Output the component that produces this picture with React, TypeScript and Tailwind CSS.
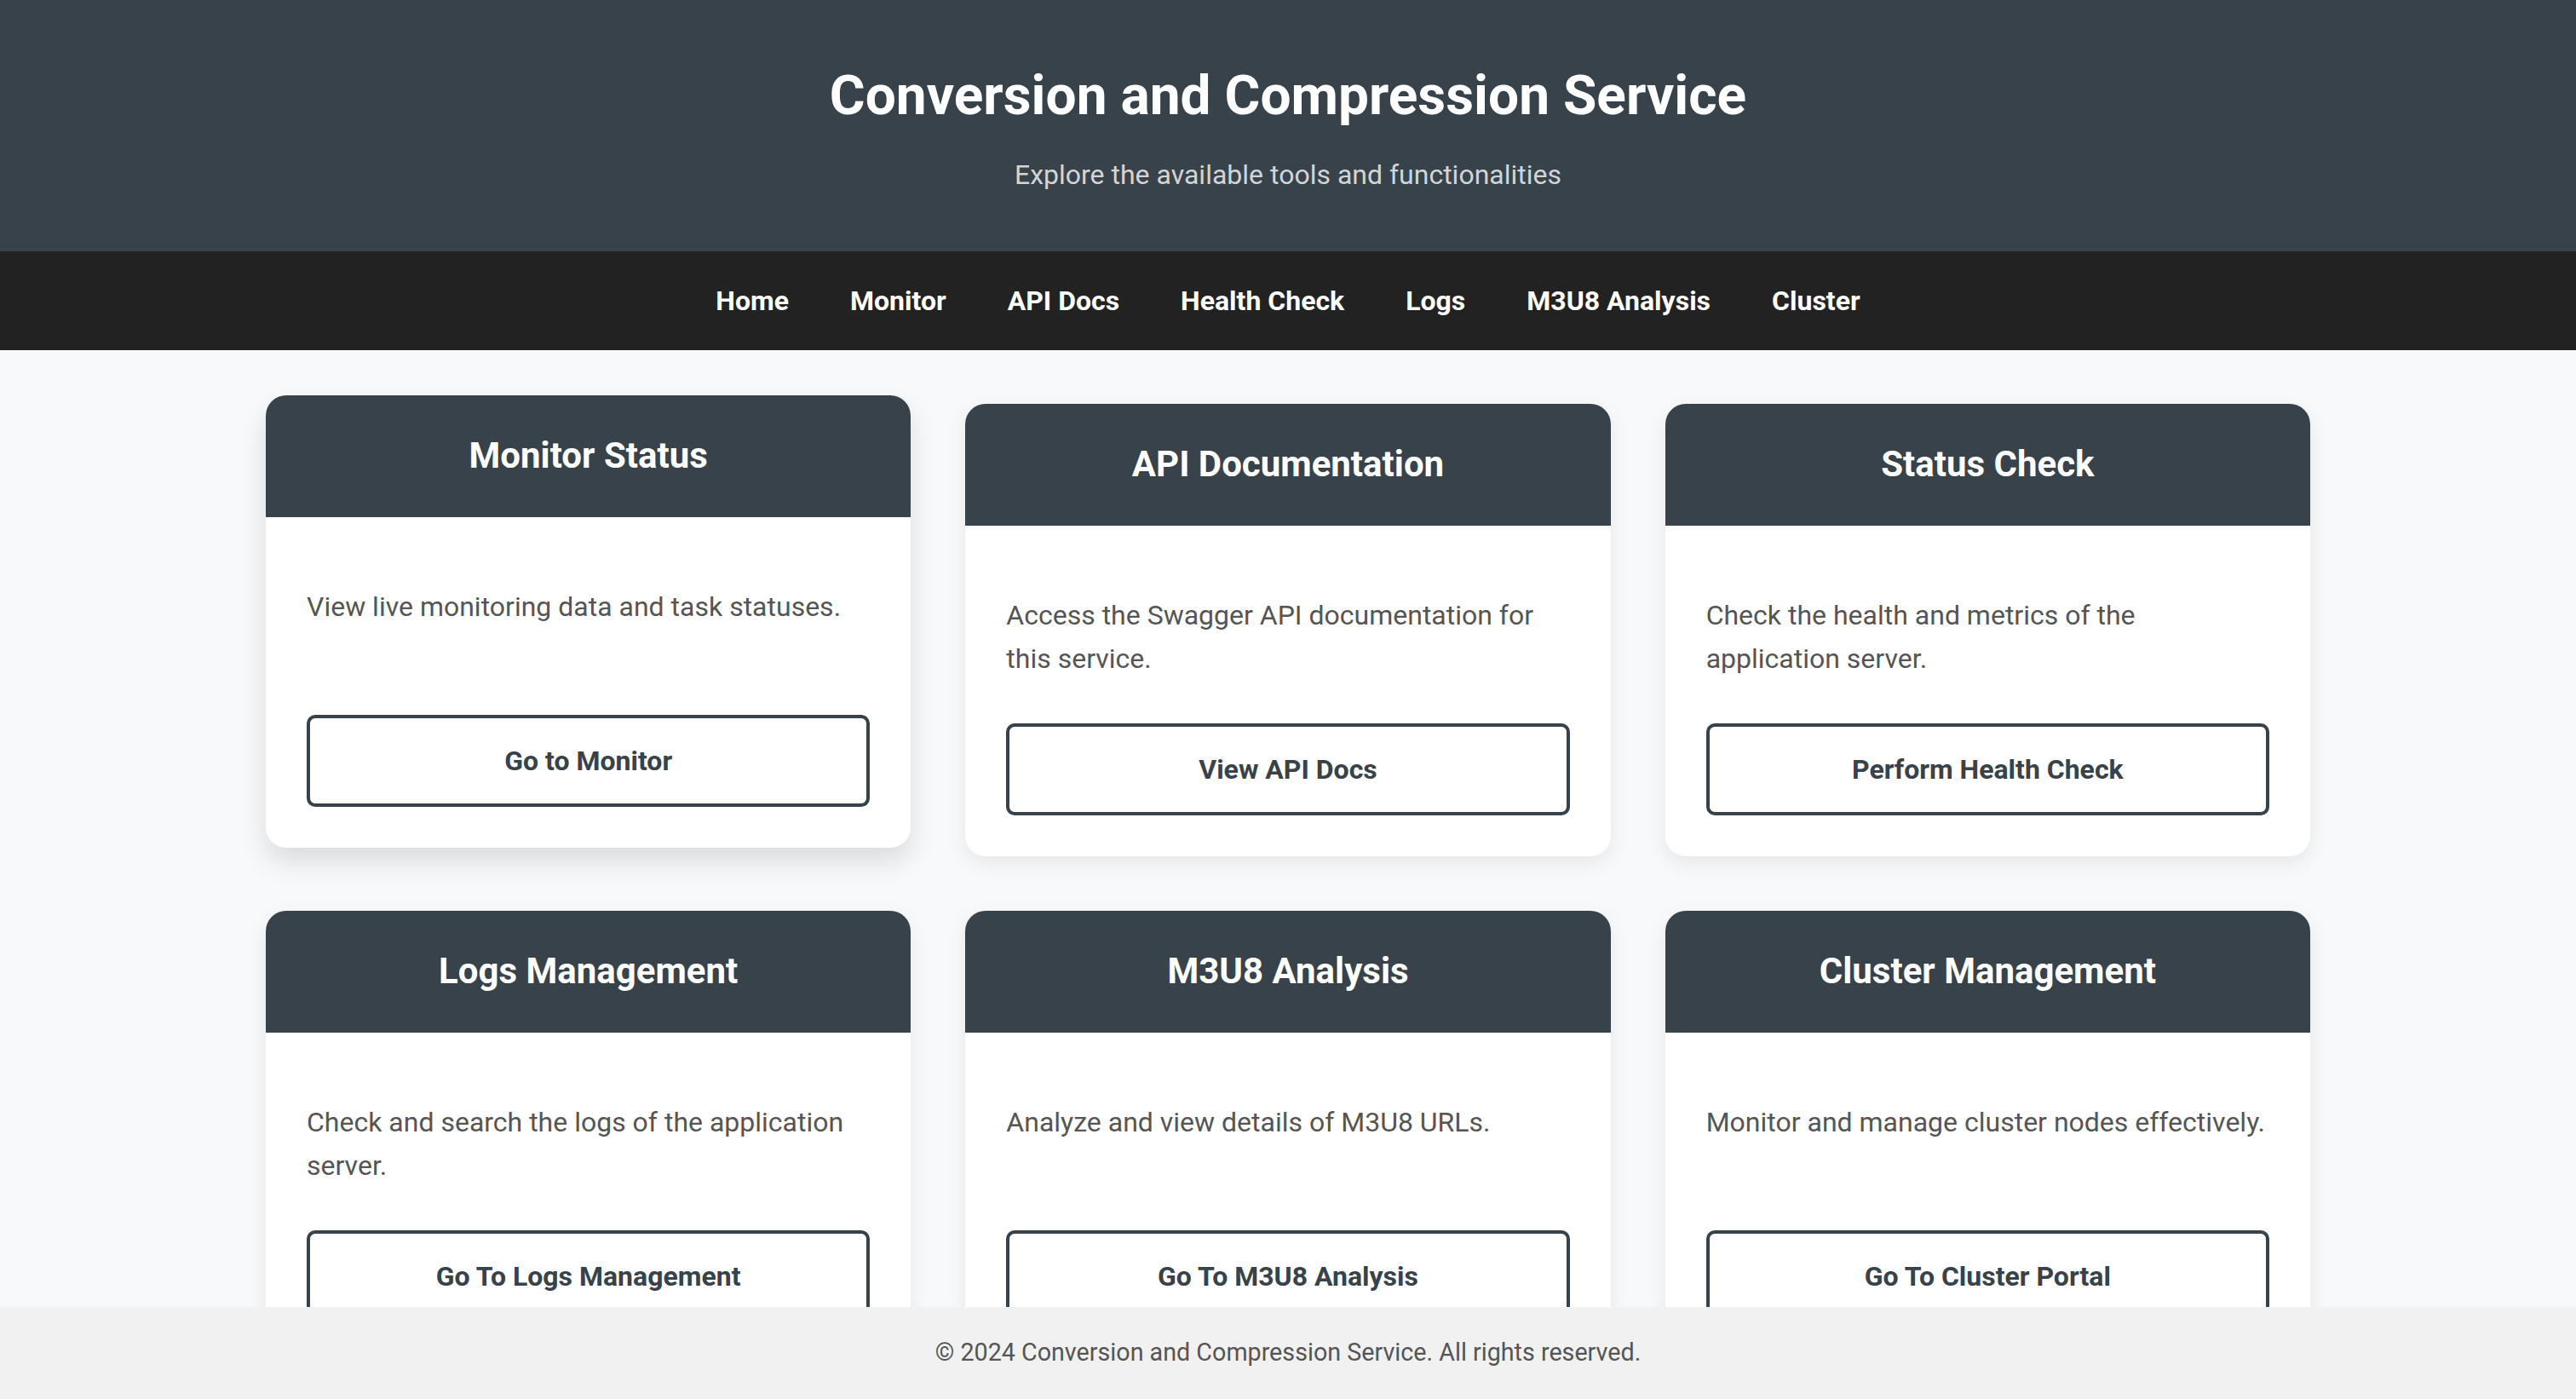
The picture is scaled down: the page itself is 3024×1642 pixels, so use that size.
const navLinks = ['Home', 'Monitor', 'API Docs', 'Health Check', 'Logs', 'M3U8 Analysis', 'Cluster']

const cards = [
  {
    title: 'Monitor Status',
    text: 'View live monitoring data and task statuses.',
    action: 'Go to Monitor',
    hovered: true,
  },
  {
    title: 'API Documentation',
    text: 'Access the Swagger API documentation for this service.',
    action: 'View API Docs',
  },
  {
    title: 'Status Check',
    text: 'Check the health and metrics of the application server.',
    action: 'Perform Health Check',
  },
  {
    title: 'Logs Management',
    text: 'Check and search the logs of the application server.',
    action: 'Go To Logs Management',
  },
  {
    title: 'M3U8 Analysis',
    text: 'Analyze and view details of M3U8 URLs.',
    action: 'Go To M3U8 Analysis',
  },
  {
    title: 'Cluster Management',
    text: 'Monitor and manage cluster nodes effectively.',
    action: 'Go To Cluster Portal',
  },
]

interface CardProps {
  title: string
  text: string
  action: string
  hovered?: boolean
}

const Card = ({ title, text, action, hovered }: CardProps) => {
  return (
    <div
      className={
        hovered
          ? 'flex flex-col bg-white rounded-[24px] overflow-hidden -translate-y-[10px] shadow-[0_16px_32px_rgba(0,0,0,0.12)]'
          : 'flex flex-col bg-white rounded-[24px] overflow-hidden shadow-[0_8px_24px_rgba(0,0,0,0.08)]'
      }
    >
      <div className="h-[143px] bg-[#37424a] flex items-center justify-center">
        <h2 className="text-[42px] leading-[1.2] font-bold text-white">{title}</h2>
      </div>
      <div className="flex-1 flex flex-col px-[48px] pt-[48px] pb-[48px]">
        <p className="mt-[32px] mb-[50px] text-[32px] leading-[51px] text-[#555]">{text}</p>
        <button className="mt-auto h-[108px] w-full border-[4px] border-[#37424a] rounded-[10px] bg-white text-[32px] font-bold text-[#37424a]">
          {action}
        </button>
      </div>
    </div>
  )
}

export default function App() {
  return (
    <div className="min-h-screen bg-[#f8f9fa] font-['Roboto',sans-serif] pb-[160px]">
      {/* Header */}
      <header className="bg-[#37424a] text-center pt-[74px] pb-[66px]">
        <h1 className="text-[64px] leading-[77px] font-bold text-white">Conversion and Compression Service</h1>
        <p className="mt-[30px] text-[32px] leading-[48px] text-[#d2d5d8]">
          Explore the available tools and functionalities
        </p>
      </header>

      {/* Nav */}
      <nav className="bg-[#222222] flex justify-center gap-[72px] py-[34px]">
        {navLinks.map((link) => (
          <a key={link} href="#" className="text-[32px] leading-[48px] font-bold text-white">
            {link}
          </a>
        ))}
      </nav>

      {/* Cards */}
      <main className="max-w-[2400px] mx-auto pt-[63px] grid grid-cols-3 gap-[64px]">
        {cards.map((card) => (
          <Card key={card.title} {...card} />
        ))}
      </main>

      {/* Footer */}
      <footer className="fixed bottom-0 left-0 right-0 h-[108px] bg-[#f1f1f1] flex items-center justify-center">
        <p className="text-[28.7px] text-[#555]">© 2024 Conversion and Compression Service. All rights reserved.</p>
      </footer>
    </div>
  )
}
